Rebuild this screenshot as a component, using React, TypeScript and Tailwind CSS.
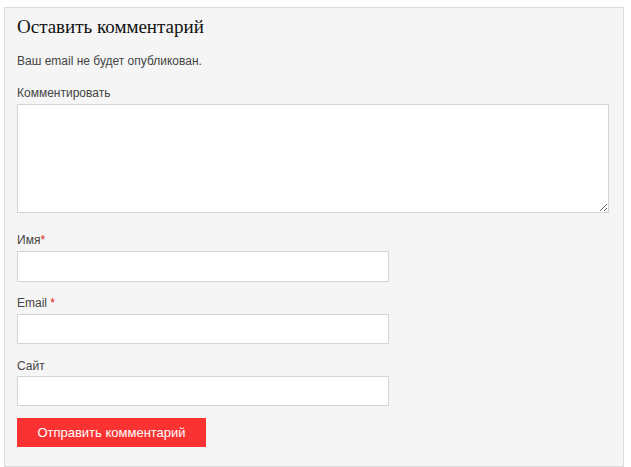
import React from "react";

export default function App() {
  const sans = { fontFamily: '"Liberation Sans", Arial, sans-serif' };
  return (
    <div className="pt-[7px] pl-[4px] bg-white" style={sans}>
      <div className="w-[620px] h-[460px] border border-[#dcdcdc] bg-[#f5f5f5] px-[12px] pt-[7px]">
        <h3
          className="text-[19px] leading-[24px] text-[#111] m-0"
          style={{ fontFamily: '"Liberation Serif", "Times New Roman", serif' }}
        >
          Оставить комментарий
        </h3>
        <p className="mt-[14px] text-[12px] leading-[16px] text-[#444]">
          Ваш email не будет опубликован.
        </p>
        <label className="block mt-[16px] text-[12px] leading-[16px] text-[#444]">
          Комментировать
        </label>
        <textarea className="block mt-[3px] w-[592px] h-[109px] bg-white border border-[#d4d4d4] outline-none" />
        <label className="block mt-[19px] text-[12px] leading-[16px] text-[#444]">
          Имя<span className="text-[#e02020]">*</span>
        </label>
        <input className="block mt-[3px] w-[372px] h-[31px] bg-white border border-[#d4d4d4] outline-none" />
        <label className="block mt-[13px] text-[12px] leading-[16px] text-[#444]">
          Email <span className="text-[#e02020]">*</span>
        </label>
        <input className="block mt-[3px] w-[372px] h-[30px] bg-white border border-[#d4d4d4] outline-none" />
        <label className="block mt-[14px] text-[12px] leading-[16px] text-[#444]">
          Сайт
        </label>
        <input className="block mt-[2px] w-[372px] h-[30px] bg-white border border-[#d4d4d4] outline-none" />
        <button className="block mt-[12px] h-[29px] w-[189px] text-center bg-[#fa3232] text-white text-[13px] leading-[29px]">
          Отправить комментарий
        </button>
      </div>
    </div>
  );
}
